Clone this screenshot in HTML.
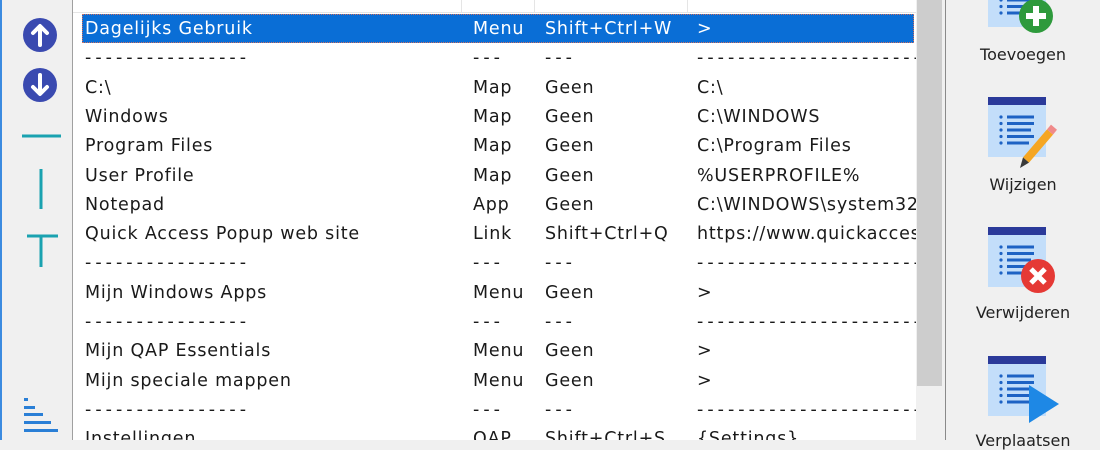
<!DOCTYPE html>
<html><head><meta charset="utf-8"><style>
*{margin:0;padding:0;box-sizing:border-box}
body{width:1100px;height:440px;overflow:hidden;background:#f0f0f0;position:relative;font-family:"DejaVu Sans","Liberation Sans",sans-serif;font-size:17.5px;color:#1a1a1a}
.abs{position:absolute}
#list{left:72px;top:0;width:872px;height:440px;background:#fff;border-left:1px solid #a0a0a0;overflow:hidden}
.row{position:absolute;left:0;width:843px;height:29px;line-height:30px;white-space:nowrap;letter-spacing:0.8px;overflow:hidden}
.row span{position:absolute;top:0}
.d span{letter-spacing:4px}
.c1{left:12px}.c2{left:400px}.c3{left:472px}.c4{left:624px}
.sel{background:#0a6ed6;color:#fff;outline:1px dotted #d07060;outline-offset:-1px;left:9px;width:832px}
.sel .c1{left:3px}.sel .c2{left:391px}.sel .c3{left:463px}.sel .c4{left:615px}
.lbl{position:absolute;width:154px;left:946px;text-align:center;font-family:"DejaVu Sans",sans-serif;font-size:16px;color:#222}
</style></head><body>
<div class="abs" style="left:0;top:0;width:2px;height:440px;background:#3c8be0"></div>
<svg class="abs" style="left:0;top:0" width="72" height="440">
<circle cx="40" cy="35" r="17" fill="#3a4ab0"/>
<path d="M40 45V27M33 33l7-7 7 7" stroke="#fff" stroke-width="4" fill="none" stroke-linecap="round" stroke-linejoin="round"/>
<circle cx="40" cy="85" r="17" fill="#3a4ab0"/>
<path d="M40 75v18M33 87l7 7 7-7" stroke="#fff" stroke-width="4" fill="none" stroke-linecap="round" stroke-linejoin="round"/>
<path d="M22 136H61M41 169V209M27 236H58M41 236V267" stroke="#1aa2b0" stroke-width="3"/>
<g fill="#2a7fd6"><rect x="24" y="398" width="4" height="3"/><rect x="24" y="406" width="11" height="3"/><rect x="24" y="413" width="19" height="3"/><rect x="24" y="421" width="27" height="3"/><rect x="24" y="429" width="34" height="3"/></g>
</svg>
<div id="list" class="abs">
<div class="abs" style="left:0;top:0;width:843px;height:13px;border-bottom:1px solid #e5e5e5"></div>
<div class="abs" style="left:388px;top:0;width:1px;height:13px;background:#e5e5e5"></div>
<div class="abs" style="left:461px;top:0;width:1px;height:13px;background:#e5e5e5"></div>
<div class="abs" style="left:614px;top:0;width:1px;height:13px;background:#e5e5e5"></div>
<div class="row sel" style="top:14px"><span class="c1">Dagelijks Gebruik</span><span class="c2">Menu</span><span class="c3">Shift+Ctrl+W</span><span class="c4">&gt;</span></div>
<div class="row d" style="top:43.3px"><span class="c1">----------------</span><span class="c2">---</span><span class="c3">---</span><span class="c4">-------------------------</span></div>
<div class="row" style="top:72.6px"><span class="c1">C:\</span><span class="c2">Map</span><span class="c3">Geen</span><span class="c4">C:\</span></div>
<div class="row" style="top:101.9px"><span class="c1">Windows</span><span class="c2">Map</span><span class="c3">Geen</span><span class="c4">C:\WINDOWS</span></div>
<div class="row" style="top:131.2px"><span class="c1">Program Files</span><span class="c2">Map</span><span class="c3">Geen</span><span class="c4">C:\Program Files</span></div>
<div class="row" style="top:160.5px"><span class="c1">User Profile</span><span class="c2">Map</span><span class="c3">Geen</span><span class="c4">%USERPROFILE%</span></div>
<div class="row" style="top:189.8px"><span class="c1">Notepad</span><span class="c2">App</span><span class="c3">Geen</span><span class="c4">C:\WINDOWS\system32\notepad.exe</span></div>
<div class="row" style="top:219.1px"><span class="c1">Quick Access Popup web site</span><span class="c2">Link</span><span class="c3">Shift+Ctrl+Q</span><span class="c4">https://www.quickaccesspopup.com</span></div>
<div class="row d" style="top:248.4px"><span class="c1">----------------</span><span class="c2">---</span><span class="c3">---</span><span class="c4">-------------------------</span></div>
<div class="row" style="top:277.7px"><span class="c1">Mijn Windows Apps</span><span class="c2">Menu</span><span class="c3">Geen</span><span class="c4">&gt;</span></div>
<div class="row d" style="top:307px"><span class="c1">----------------</span><span class="c2">---</span><span class="c3">---</span><span class="c4">-------------------------</span></div>
<div class="row" style="top:336.3px"><span class="c1">Mijn QAP Essentials</span><span class="c2">Menu</span><span class="c3">Geen</span><span class="c4">&gt;</span></div>
<div class="row" style="top:365.6px"><span class="c1">Mijn speciale mappen</span><span class="c2">Menu</span><span class="c3">Geen</span><span class="c4">&gt;</span></div>
<div class="row d" style="top:394.9px"><span class="c1">----------------</span><span class="c2">---</span><span class="c3">---</span><span class="c4">-------------------------</span></div>
<div class="row" style="top:424.2px"><span class="c1">Instellingen</span><span class="c2">QAP</span><span class="c3">Shift+Ctrl+S</span><span class="c4">{Settings}</span></div>
<div class="abs" style="left:843px;top:0;width:29px;height:440px;background:#f0f0f0;z-index:5"></div>
<div class="abs" style="left:844px;top:0;width:25px;height:386px;background:#cdcdcd;z-index:6"></div>
</div>
<div class="abs" style="left:945px;top:0;width:1px;height:440px;background:#8a8a8a"></div>
<svg class="abs" style="left:946px;top:0" width="154" height="440">
<defs>
<g id="ic">
<rect x="42" y="0" width="58" height="60" fill="#c3defa"/>
<rect x="42" y="0" width="58" height="8" fill="#2b3a9a"/>
<g fill="#1d62c4"><circle cx="55" cy="20" r="1.6"/><circle cx="55" cy="26.5" r="1.6"/><circle cx="55" cy="33" r="1.6"/><circle cx="55" cy="39.5" r="1.6"/><circle cx="55" cy="46" r="1.6"/>
<rect x="61" y="18.5" width="27" height="3"/><rect x="61" y="25" width="27" height="3"/><rect x="61" y="31.5" width="24" height="3"/><rect x="61" y="38" width="27" height="3"/><rect x="61" y="44.5" width="22" height="3"/></g>
</g>
</defs>
<use href="#ic" y="-33"/>
<circle cx="90" cy="16" r="17" fill="#2e9a3c"/>
<path d="M90 6v20M80 16h20" stroke="#fff" stroke-width="6"/>
<use href="#ic" y="97"/>
<polygon points="107,134.6 101,129.4 77,157.4 83,162.6" fill="#f5a623"/>
<polygon points="77,157.4 83,162.6 74,168" fill="#3a3a3a"/>
<polygon points="107,134.6 101,129.4 105,124.6 111,129.8" fill="#f08a8a"/>
<use href="#ic" y="227"/>
<circle cx="92" cy="276" r="17" fill="#e53935"/>
<path d="M85 269l14 14M99 269l-14 14" stroke="#fff" stroke-width="5"/>
<use href="#ic" y="356"/>
<path d="M83 385l30 19-30 19z" fill="#1e88e5"/>
</svg>
<div class="lbl" style="top:45px">Toevoegen</div>
<div class="lbl" style="top:175px">Wijzigen</div>
<div class="lbl" style="top:303px">Verwijderen</div>
<div class="lbl" style="top:431px">Verplaatsen</div>
</body></html>
